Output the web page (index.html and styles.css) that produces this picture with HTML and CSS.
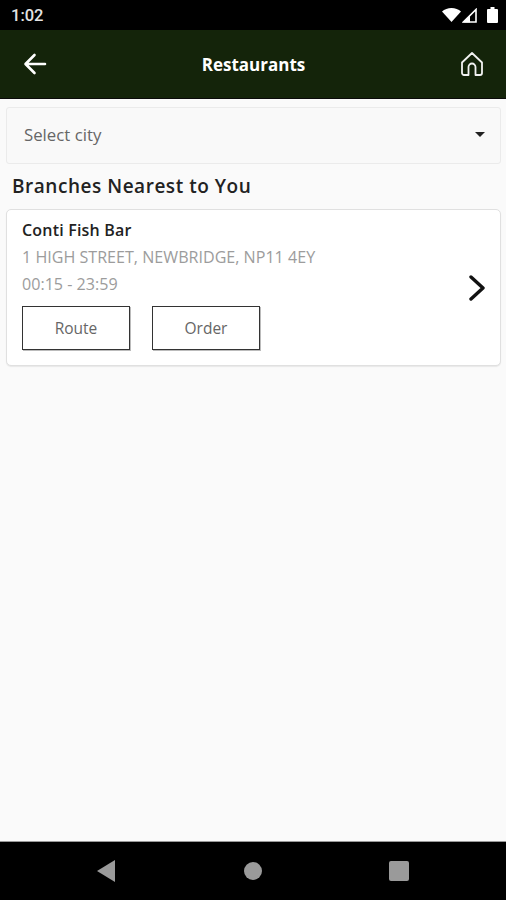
FILE: index.html
```html
<!DOCTYPE html>
<html lang="en">
<head>
<meta charset="utf-8">
<title>Restaurants</title>
<link rel="stylesheet" href="styles.css">
</head>
<body>
<div class="phone">
  <div class="status">
    <span class="time">1:02</span>
    <div class="status-icons">
      <svg width="19" height="14" viewBox="0 0 19 14"><path d="M0 3.500C2.500 1.200 5.800 0 9.500 0s7 1.200 9.500 3.500L9.500 14z" fill="#fff"/></svg>
      <svg width="15" height="15" viewBox="0 0 15 15"><path d="M14 1.500V14H1.500z" fill="none" stroke="#fff" stroke-width="1.600"/><path d="M1 14.500l7-7v7z" fill="#fff"/></svg>
      <svg class="battery" width="11" height="16" viewBox="0 0 11 16"><path d="M3.500 0h4v2H10a1 1 0 0 1 1 1v12a1 1 0 0 1-1 1H1a1 1 0 0 1-1-1V3a1 1 0 0 1 1-1h2.500z" fill="#fff"/></svg>
    </div>
  </div>
  <header class="appbar">
    <svg class="icon" width="24" height="22" viewBox="0 0 24 22"><path d="M22 11H3M11.500 2L2.500 11l9 9" fill="none" stroke="#fff" stroke-width="2.600" stroke-linecap="round" stroke-linejoin="round"/></svg>
    <h1 class="title">Restaurants</h1>
    <svg class="icon" width="24" height="26" viewBox="0 0 24 26"><path d="M2 11.500L12 2l10 9.500V22a2 2 0 0 1-2 2h-4.500V16a3.500 3.500 0 0 0-7 0v8H4a2 2 0 0 1-2-2z" fill="none" stroke="#f2f2f2" stroke-width="1.800" stroke-linejoin="round"/></svg>
  </header>
  <main class="content">
    <div class="select">
      <span>Select city</span>
      <svg width="10" height="5" viewBox="0 0 10 5"><path d="M0 0h10L5 5z" fill="#222"/></svg>
    </div>
    <h2 class="heading">Branches Nearest to You</h2>
    <section class="card">
      <div class="info">
        <div class="name">Conti Fish Bar</div>
        <div class="line">1 HIGH STREET, NEWBRIDGE, NP11 4EY</div>
        <div class="line">00:15 - 23:59</div>
        <div class="actions">
          <button class="btn">Route</button>
          <button class="btn">Order</button>
        </div>
      </div>
      <svg class="chevron" width="18" height="26" viewBox="0 0 18 26"><path d="M3 2l12 11L3 24" fill="none" stroke="#111" stroke-width="3.400" stroke-linecap="round" stroke-linejoin="round"/></svg>
    </section>
  </main>
  <nav class="navbar">
    <svg width="18" height="22" viewBox="0 0 18 22"><path d="M18 0v22L0 11z" fill="#9a9a9a"/></svg>
    <svg class="home-dot" width="18" height="18" viewBox="0 0 18 18"><circle cx="9" cy="9" r="9" fill="#9a9a9a"/></svg>
    <svg width="20" height="20" viewBox="0 0 20 20"><rect width="20" height="20" rx="2" fill="#9a9a9a"/></svg>
  </nav>
</div>
</body>
</html>
```
FILE: styles.css
```css
* { box-sizing: border-box; }
html, body { margin: 0; padding: 0; }
body { font-family: "Open Sans", sans-serif; background: #fafafa; }
.phone { width: 506px; height: 900px; display: flex; flex-direction: column; background: #fafafa; }
.status { height: 30px; flex: none; background: #000; color: #e4e4e4; display: flex; align-items: center; justify-content: space-between; padding: 0 8px 0 11px; }
.time { font-family: Roboto, sans-serif; font-size: 16.500px; font-weight: 500; }
.status-icons { display: flex; align-items: center; gap: 1px; }
.battery { margin-left: 9px; }
.appbar { height: 69px; flex: none; background: #14240a; border-bottom: 1px solid #0a0a0a; display: flex; align-items: center; justify-content: space-between; padding: 0 22px 0 23px; }
.icon { display: block; }
.title { margin: 2px 0 0; color: #fff; font-size: 17px; font-weight: 700; line-height: 24px; }
.content { flex: 1; padding: 8px 5px 0 6px; display: flex; flex-direction: column; }
.select { height: 57px; background: #f9f9f9; border: 1px solid #ebebeb; border-radius: 3px; display: flex; align-items: center; justify-content: space-between; padding: 0 15px 2px 17px; font-size: 16.800px; color: #666; }
.heading { margin: 10px 0 10px 6px; font-size: 19px; font-weight: 600; line-height: 25px; letter-spacing: .53px; color: #222; }
.card { height: 157px; background: #fff; border: 1px solid #e0e0e0; border-radius: 5px; box-shadow: 0 1px 1px #e8e8e8; display: flex; align-items: flex-start; justify-content: space-between; padding: 10px 14px 0 15px; }
.info { display: flex; flex-direction: column; }
.name { font-size: 16px; font-weight: 600; line-height: 20px; color: #222; letter-spacing: .2px; }
.line { font-size: 16.100px; line-height: 20px; margin-top: 7px; color: #9c9c9c; }
.actions { display: flex; gap: 22px; margin-top: 12px; }
.btn { width: 108px; height: 44px; background: #fff; border: 1px solid #333; border-radius: 0; box-shadow: 1px 1px 0 #bbb; font: 400 15.500px "Open Sans", sans-serif; color: #666; padding: 0; }
.chevron { align-self: center; margin-top: -9px; }
.navbar { height: 59px; flex: none; background: #000; border-top: 1px solid #999; display: flex; align-items: center; justify-content: space-between; padding: 0 97px; }
.home-dot { margin-left: 2px; }
```
